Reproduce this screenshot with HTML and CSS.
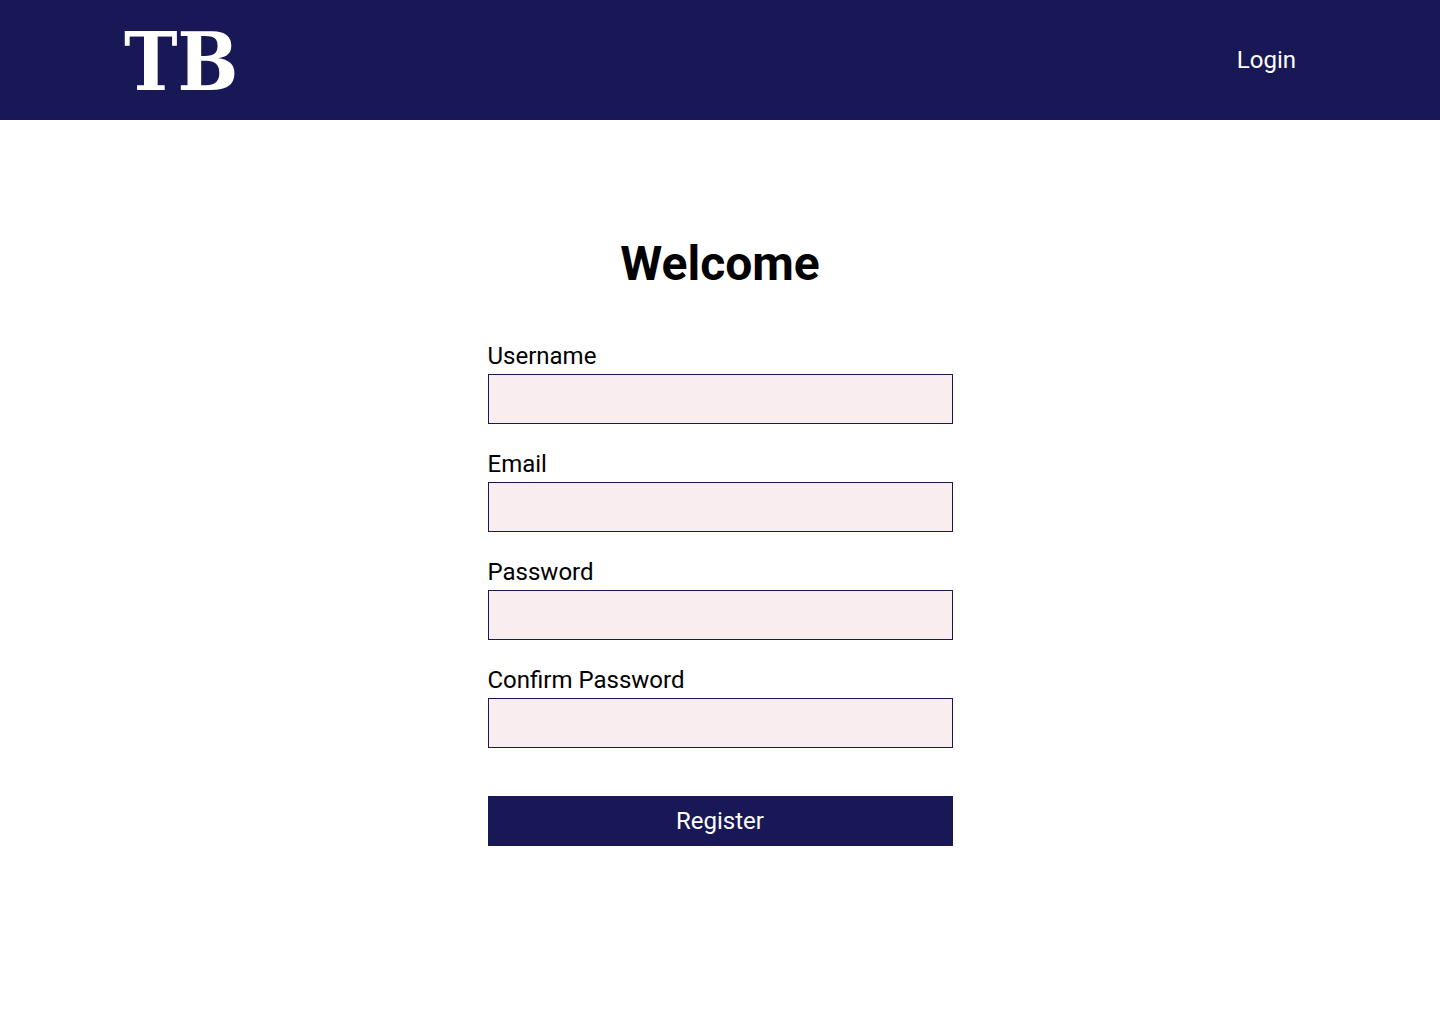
FILE: index.html
```html
<!DOCTYPE html>
<html lang="en">
<head>
<meta charset="utf-8">
<meta name="viewport" content="width=device-width, initial-scale=1">
<title>Register</title>
<link rel="stylesheet" href="styles.css">
</head>
<body>
<header class="site-header">
  <a class="logo" href="#">TB</a>
  <nav><a class="nav-link" href="#">Login</a></nav>
</header>
<main class="main">
  <h1 class="title">Welcome</h1>
  <form class="form">
    <div class="field">
      <label class="label" for="username">Username</label>
      <input class="input" id="username" type="text">
    </div>
    <div class="field">
      <label class="label" for="email">Email</label>
      <input class="input" id="email" type="email">
    </div>
    <div class="field">
      <label class="label" for="password">Password</label>
      <input class="input" id="password" type="password">
    </div>
    <div class="field">
      <label class="label" for="confirm">Confirm Password</label>
      <input class="input" id="confirm" type="password">
    </div>
    <button class="button" type="submit">Register</button>
  </form>
</main>
</body>
</html>
```
FILE: styles.css
```css
* {
  box-sizing: border-box;
}

body {
  margin: 0;
  background: #fff;
  color: #000;
  font-family: Roboto, sans-serif;
  font-size: 24px;
  line-height: 28px;
}

.site-header {
  display: flex;
  align-items: center;
  justify-content: space-between;
  height: 120px;
  padding: 0 144px 0 124px;
  background: #171855;
}

.logo {
  padding-top: 4px;
  color: #fff;
  font-family: "DejaVu Serif Condensed", "DejaVu Serif", serif;
  font-size: 80px;
  font-weight: 700;
  line-height: 116px;
  text-decoration: none;
}

.nav-link {
  color: #fff;
  text-decoration: none;
}

.main {
  display: flex;
  flex-direction: column;
  align-items: center;
  padding: 116px 24px 48px;
}

.title {
  margin: 0 0 50px;
  font-size: 48px;
  font-weight: 700;
  line-height: 56px;
}

.form {
  display: flex;
  flex-direction: column;
  gap: 26px;
  width: 100%;
  max-width: 465px;
}

.field {
  display: flex;
  flex-direction: column;
  gap: 4px;
}

.input {
  width: 100%;
  height: 50px;
  padding: 0 12px;
  border: 1px solid #171855;
  border-radius: 0;
  background: #f9edef;
  font: inherit;
}

.button {
  height: 50px;
  margin-top: 22px;
  border: 0;
  background: #171855;
  color: #fff;
  font: inherit;
}
```
